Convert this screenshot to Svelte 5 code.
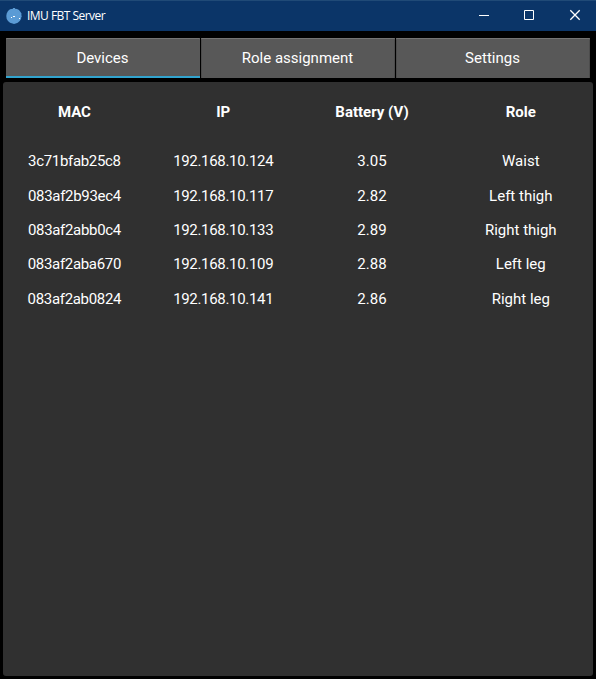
<script>
  const tabs = ['Devices', 'Role assignment', 'Settings'];
  const columns = ['MAC', 'IP', 'Battery (V)', 'Role'];
  const devices = [
    ['3c71bfab25c8', '192.168.10.124', '3.05', 'Waist'],
    ['083af2b93ec4', '192.168.10.117', '2.82', 'Left thigh'],
    ['083af2abb0c4', '192.168.10.133', '2.89', 'Right thigh'],
    ['083af2aba670', '192.168.10.109', '2.88', 'Left leg'],
    ['083af2ab0824', '192.168.10.141', '2.86', 'Right leg']
  ];
  let active = $state(0);
</script>

<div class="window">
  <header>
    <svg class="logo" width="16" height="16" viewBox="0 0 16 16">
      <path d="M7 0h2v.7l2 .3 2 1 1.5 2 1 1.5-.2 2 .7.5-.7 1-.3 2-1.3 2-2 1.7-2 .8L8 16l-1.5-.5-2.5-.7-2-1.8-1.3-2L.3 8l.4-2.5L2 3l2-1.7L7 .7z" fill="#5b9bd5" />
      <path d="M7 8h2v1H7zM5 9h1v1H5zM13 10h1v1h-1z" fill="#fff" />
    </svg>
    <span class="title">IMU FBT Server</span>
    <div class="controls">
      <svg width="46" height="30" viewBox="0 0 46 30"><path d="M18 15.5h10" /></svg>
      <svg width="46" height="30" viewBox="0 0 46 30"><path d="M17.5 10.5h9v9h-9z" /></svg>
      <svg width="46" height="30" viewBox="0 0 46 30"><path class="close" d="M17.3 10.3l9.4 9.4M26.7 10.3l-9.4 9.4" /></svg>
    </div>
  </header>

  <nav>
    {#each tabs as tab, i}
      <button class:active={active === i} onclick={() => (active = i)}>{tab}</button>
    {/each}
  </nav>

  <main>
    <div class="row head">
      {#each columns as column}<span>{column}</span>{/each}
    </div>
    <div class="rows">
      {#each devices as device}
        <div class="row">
          {#each device as cell, i}<span class:address={i < 2}>{cell}</span>{/each}
        </div>
      {/each}
    </div>
  </main>
</div>

<style>
  .window {
    box-sizing: border-box;
    width: 596px;
    height: 679px;
    display: flex;
    flex-direction: column;
    background: #000;
    color: #fff;
    font: 15px Roboto, sans-serif;
    overflow: hidden;
  }
  header {
    box-sizing: border-box;
    flex: none;
    height: 31px;
    display: flex;
    align-items: center;
    padding-left: 6px;
    background: #0b3568;
    border-top: 1px solid #204a77;
  }
  .logo {
    flex: none;
    margin-top: -1px;
  }
  .title {
    margin-left: 5px;
    font: 12px/16px 'Open Sans', 'Noto Sans', sans-serif;
    letter-spacing: -0.53px;
    white-space: nowrap;
  }
  .controls {
    display: flex;
    margin: -2px -3px 0 auto;
  }
  .controls path {
    fill: none;
    stroke: #fff;
    stroke-width: 1;
  }
  .controls .close {
    stroke-width: 1.3;
  }
  nav {
    flex: none;
    display: flex;
    gap: 1px;
    padding: 7px 6px 4px;
  }
  button {
    box-sizing: border-box;
    flex: 1;
    height: 40px;
    padding: 0 1px 1px 0;
    border: 0;
    border-radius: 1px 1px 0 0;
    background: #585858;
    box-shadow: inset 0 1px #747474, inset 1px 0 #4c4c4c, inset -1px 0 #4c4c4c;
    color: #fff;
    font: inherit;
  }
  button.active {
    background: linear-gradient(#585858 38px, #32a4ce 38px);
    box-shadow: inset 0 1px #747474;
  }
  main {
    flex: 1;
    margin: 0 3px 3px;
    padding-top: 12px;
    border-radius: 3px;
    background: #303030;
  }
  .row {
    display: grid;
    grid-template-columns: repeat(4, 148.8px);
    margin: 0 -3px;
    height: 34.4px;
    line-height: 34.4px;
    text-align: center;
  }
  .address {
    letter-spacing: -0.32px;
  }
  .head {
    height: 36px;
    line-height: 36px;
    font-weight: 700;
  }
  .rows {
    padding-top: 14.2px;
  }
</style>
